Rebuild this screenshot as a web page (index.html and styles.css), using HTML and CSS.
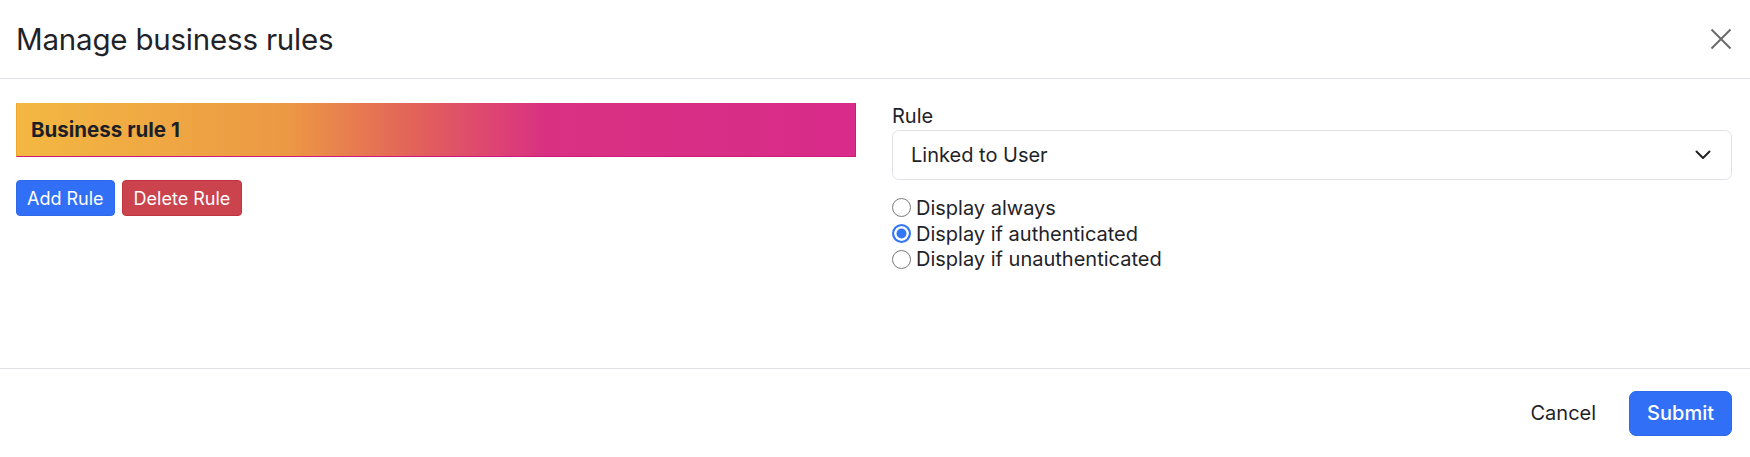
FILE: index.html
```html
<!DOCTYPE html>
<html lang="en">
<head>
<meta charset="utf-8">
<title>Manage business rules</title>
<link rel="stylesheet" href="styles.css">
</head>
<body>
<div class="modal">
  <div class="modal-header">
    <h1 class="modal-title">Manage business rules</h1>
    <button class="close" aria-label="Close">
      <svg width="22" height="22" viewBox="0 0 22 22"><path d="M1.5 1.5 L20.5 20.5 M20.5 1.5 L1.5 20.5" stroke="#6b6b6b" stroke-width="2" fill="none"/></svg>
    </button>
  </div>
  <div class="modal-body">
    <div class="col-left">
      <div class="rule-bar">Business rule 1</div>
      <div class="btn-row">
        <button class="btn btn-primary btn-sm">Add Rule</button>
        <button class="btn btn-danger btn-sm">Delete Rule</button>
      </div>
    </div>
    <div class="col-right">
      <label class="form-label">Rule</label>
      <div class="select">
        <span>Linked to User</span>
        <svg width="16" height="10" viewBox="0 0 16 10"><path d="M1.5 1.5 L8 8 L14.5 1.5" stroke="#222" stroke-width="2" fill="none" stroke-linecap="round" stroke-linejoin="round"/></svg>
      </div>
      <div class="radios">
        <label class="radio"><span class="dot"></span>Display always</label>
        <label class="radio"><span class="dot checked"></span>Display if authenticated</label>
        <label class="radio"><span class="dot"></span>Display if unauthenticated</label>
      </div>
    </div>
  </div>
  <div class="modal-footer">
    <button class="btn btn-link">Cancel</button>
    <button class="btn btn-primary btn-lg">Submit</button>
  </div>
</div>
</body>
</html>
```

FILE: styles.css
```css
* { box-sizing: border-box; }
html, body { margin: 0; padding: 0; background: #fff; }
body {
  font-family: Inter, "Liberation Sans", sans-serif;
  color: #212529;
  width: 1750px;
  height: 457px;
  overflow: hidden;
}
.modal { display: flex; flex-direction: column; height: 457px; }
.modal-header {
  height: 79px;
  border-bottom: 1px solid #dee2e6;
  display: flex;
  align-items: center;
  justify-content: space-between;
  padding: 0 18px 0 16px;
}
.modal-title {
  margin: 0;
  font-size: 29.5px;
  font-weight: 400;
  letter-spacing: -0.2px;
  color: #1f2328;
}
.close {
  border: 0; background: none; padding: 0; width: 22px; height: 22px;
  display: flex;
}
.modal-body {
  height: 290px;
  padding: 24px 18px 0 16px;
  display: grid;
  grid-template-columns: 1fr 1fr;
  column-gap: 36px;
  border-bottom: 1px solid #dee2e6;
}
.rule-bar {
  height: 54px;
  background: linear-gradient(90deg, #f3b842 0%, #ec9944 32%, #e2605b 48%, #d93182 63%, #d82b8a 100%);
  border-left: 1px solid #f0a42a;
  border-right: 1px solid #cf1a7c;
  border-bottom: 1px solid #cf1a7c;
  display: flex;
  align-items: center;
  padding-left: 14px;
  font-size: 20.5px;
  font-weight: 700;
  color: #1c1f26;
}
.btn-row { display: flex; gap: 7px; margin-top: 23px; }
.btn {
  font-family: inherit;
  border: 1px solid transparent;
  cursor: pointer;
}
.btn-sm {
  height: 36px;
  font-size: 18px;
  padding: 0 10px;
  border-radius: 4px;
}
.btn-danger.btn-sm { padding: 0 11px; }
.btn-primary { background: #316ff6; border-color: #2f69ea; color: #fff; }
.btn-danger { background: #cb434c; border-color: #be3540; color: #fff; }
.col-right { display: flex; flex-direction: column; }
.form-label { font-size: 20px; line-height: 22px; margin-top: 2px; color: #1f2328; }
.select {
  margin-top: 3px;
  height: 50px;
  border: 1px solid #dfe2e6;
  border-radius: 7px;
  display: flex;
  align-items: center;
  justify-content: space-between;
  padding: 0 20px 0 18px;
  font-size: 20px;
  color: #1f2328;
}
.radios { display: flex; flex-direction: column; margin-top: 15px; }
.radio {
  display: flex; align-items: center;
  height: 25.7px;
  font-size: 20px;
  color: #1f2328;
}
.dot {
  width: 19px; height: 19px;
  border-radius: 50%;
  border: 1px solid #7a7a7a;
  background: #fff;
  margin-right: 5px;
  flex: none;
}
.dot.checked {
  border: 2px solid #3478f6;
  background: #3478f6;
  box-shadow: inset 0 0 0 2.5px #fff;
}
.modal-footer {
  flex: 1;
  display: flex;
  align-items: center;
  justify-content: flex-end;
  padding: 0 18px 0 16px;
  gap: 22px;
}
.btn-link {
  background: none; color: #1f2328;
  font-size: 20px;
  padding: 0 10px;
  height: 45px;
}
.btn-lg {
  height: 45px;
  padding: 0 17px;
  font-size: 20px;
  border-radius: 7px;
  font-weight: 500;
}
```
